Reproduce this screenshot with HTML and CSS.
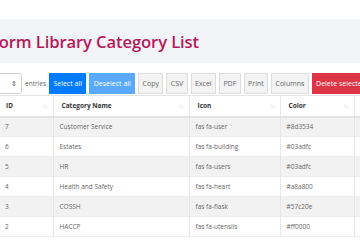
FILE: index.html
```html
<!DOCTYPE html>
<html>
<head>
<meta charset="utf-8">
<link rel="stylesheet" href="styles.css">
</head>
<body>
<div class="top-gap"></div>
<header class="title-band">
  <h1 class="title">Form Library Category List</h1>
</header>
<div class="toolbar">
  <label class="length">
    <span class="select">100<span class="caret">&#8661;</span></span>
    <span class="entries">entries</span>
  </label>
  <div class="buttons">
    <button class="btn btn-primary">Select all</button>
    <button class="btn btn-primary disabled">Deselect all</button>
    <button class="btn btn-light">Copy</button>
    <button class="btn btn-light">CSV</button>
    <button class="btn btn-light">Excel</button>
    <button class="btn btn-light">PDF</button>
    <button class="btn btn-light">Print</button>
    <button class="btn btn-light">Columns</button>
    <button class="btn btn-danger">Delete selected</button>
  </div>
</div>
<table class="grid">
  <colgroup>
    <col class="c-id"><col class="c-name"><col class="c-icon"><col class="c-color"><col class="c-act">
  </colgroup>
  <thead>
    <tr>
      <th>ID<span class="sort">&#8593;&#8595;</span></th>
      <th>Category Name<span class="sort">&#8593;&#8595;</span></th>
      <th>Icon<span class="sort">&#8593;&#8595;</span></th>
      <th>Color<span class="sort">&#8593;&#8595;</span></th>
      <th>Actions</th>
    </tr>
  </thead>
  <tbody>
    <tr><td>7</td><td>Customer Service</td><td>fas fa-user</td><td>#8d3534</td><td></td></tr>
    <tr><td>6</td><td>Estates</td><td>fas fa-building</td><td>#03adfc</td><td></td></tr>
    <tr><td>5</td><td>HR</td><td>fas fa-users</td><td>#03adfc</td><td></td></tr>
    <tr><td>4</td><td>Health and Safety</td><td>fas fa-heart</td><td>#a8a800</td><td></td></tr>
    <tr><td>3</td><td>COSSH</td><td>fas fa-flask</td><td>#57c20e</td><td></td></tr>
    <tr><td>2</td><td>HACCP</td><td>fas fa-utensils</td><td>#ff0000</td><td></td></tr>
  </tbody>
</table>
</body>
</html>
```
FILE: styles.css
```css
html, body {
  margin: 0;
  padding: 0;
  background: #ffffff;
  overflow: hidden;
  width: 360px;
  height: 240px;
}
body {
  font-family: "Open Sans", "Noto Sans", sans-serif;
  color: #555;
}
.top-gap {
  height: 19px;
}
.title-band {
  height: 44px;
  background: #f3f4f8;
  display: flex;
  align-items: center;
  overflow: hidden;
}
.title {
  margin: 1px 0 0 -10px;
  font-size: 16.6px;
  font-weight: 600;
  color: #b5185a;
  white-space: nowrap;
  letter-spacing: -0.1px;
}
.toolbar {
  display: flex;
  align-items: center;
  margin-top: 10px;
  height: 21px;
  white-space: nowrap;
}
.length {
  display: flex;
  align-items: center;
  margin-left: -21px;
  font-size: 6.5px;
  color: #666;
}
.select {
  display: flex;
  align-items: center;
  justify-content: space-between;
  box-sizing: border-box;
  width: 43px;
  height: 21px;
  padding: 0 4px 0 8px;
  border: 1px solid #d0d0d0;
  border-radius: 3px;
  background: #fff;
  color: #888;
  font-size: 7px;
}
.caret {
  font-size: 7px;
  color: #555;
}
.entries {
  margin-left: 3px;
}
.buttons {
  display: flex;
  gap: 3px;
  margin-left: 3px;
}
.btn {
  font-family: "Open Sans", "Noto Sans", sans-serif;
  font-size: 7px;
  height: 21px;
  padding: 0 3.4px;
  border-radius: 0;
  border: 1px solid transparent;
  cursor: pointer;
  white-space: nowrap;
}
.btn-primary {
  background: #007bff;
  border-color: #007bff;
  color: #fff;
}
.btn-primary.disabled {
  background: #59a9ff;
  border-color: #59a9ff;
}
.btn-light {
  background: #f3f3f3;
  border-color: #dcdcdc;
  color: #666;
}
.btn-danger {
  background: #dc3545;
  border-color: #dc3545;
  color: #fff;
}
.grid {
  margin-top: 1px;
  border-collapse: collapse;
  table-layout: fixed;
  width: 440px;
  font-size: 6.5px;
}
.c-id { width: 53px; }
.c-name { width: 136px; }
.c-icon { width: 91px; }
.c-color { width: 74px; }
.c-act { width: 86px; }
.grid th, .grid td {
  text-align: left;
  padding: 0 6px;
  border-left: 1px solid #e6e6e6;
  white-space: nowrap;
  overflow: hidden;
}
.grid th {
  padding-left: 8px;
}
.grid th:first-child, .grid td:first-child {
  border-left: 0;
  padding-left: 5px;
}
.grid th:first-child {
  padding-left: 6px;
}
.grid thead tr {
  height: 21px;
  border-top: 1px solid #e3e3e3;
  border-bottom: 2px solid #e3e3e3;
}
.grid th {
  position: relative;
  font-weight: 700;
  color: #333;
}
.sort {
  position: absolute;
  right: 6px;
  top: 6px;
  font-size: 6px;
  font-weight: 400;
  color: #c8c8c8;
  letter-spacing: -1px;
}
.grid tbody tr {
  height: 20px;
  border-bottom: 1px solid #ececec;
}
.grid tbody tr:nth-child(odd) {
  background: #f2f2f2;
}
.grid td {
  color: #666;
}
```
